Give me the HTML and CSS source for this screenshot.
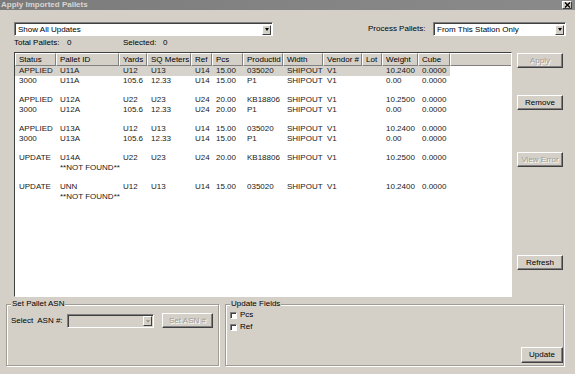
FILE: index.html
```html
<!DOCTYPE html>
<html lang="en">

<head>
    <meta charset="UTF-8">
    <title>Apply Imported Pallets</title>
    <link rel="stylesheet" href="styles.css">
</head>

<body>
    <div class="window">
        <div class="titlebar">
            <span class="title">Apply Imported Pallets</span>
            <span class="close-btn">
                <svg width="7" height="6" viewBox="0 0 7 6"><path d="M1 0.5 L6 5.5 M6 0.5 L1 5.5" stroke="#000" stroke-width="1.4"/></svg>
            </span>
        </div>

        <div class="toolbar">
            <div class="combo combo-filter">
                <span class="combo-text">Show All Updates</span>
                <span class="combo-arrow"><span class="tri"></span></span>
            </div>
            <span class="process-label">Process Pallets:</span>
            <div class="combo combo-process">
                <span class="combo-text">From This Station Only</span>
                <span class="combo-arrow"><span class="tri"></span></span>
            </div>
        </div>

        <div class="totals">
            <span class="totals-label">Total Pallets:</span>
            <span class="totals-count">0</span>
            <span class="totals-label">Selected:</span>
            <span class="totals-count">0</span>
        </div>

        <div class="main">
            <div class="grid">
                <table class="grid-table">
                    <colgroup>
                        <col style="width:41px"><col style="width:63px"><col style="width:28px"><col style="width:44px">
                        <col style="width:21px"><col style="width:31px"><col style="width:40px"><col style="width:40px">
                        <col style="width:39px"><col style="width:20px"><col style="width:36px"><col style="width:32px">
                        <col>
                    </colgroup>
                    <thead>
                        <tr>
                            <th>Status</th><th>Pallet ID</th><th>Yards</th><th>SQ Meters</th><th>Ref</th><th>Pcs</th>
                            <th>Productid</th><th>Width</th><th>Vendor #</th><th>Lot</th><th>Weight</th><th>Cube</th><th class="filler"></th>
                        </tr>
                    </thead>
                    <tbody>
                        <tr class="selected">
                            <td>APPLIED</td><td>U11A</td><td>U12</td><td>U13</td><td>U14</td><td>15.00</td>
                            <td>035020</td><td>SHIPOUT</td><td>V1</td><td></td><td>10.2400</td><td>0.0000</td><td class="filler"></td>
                        </tr>
                        <tr>
                            <td>3000</td><td>U11A</td><td>105.6</td><td>12.33</td><td>U14</td><td>15.00</td>
                            <td>P1</td><td>SHIPOUT</td><td>V1</td><td></td><td>0.00</td><td>0.0000</td><td></td>
                        </tr>
                        <tr class="spacer"><td colspan="13"></td></tr>
                        <tr>
                            <td>APPLIED</td><td>U12A</td><td>U22</td><td>U23</td><td>U24</td><td>20.00</td>
                            <td>KB18806</td><td>SHIPOUT</td><td>V1</td><td></td><td>10.2500</td><td>0.0000</td><td></td>
                        </tr>
                        <tr>
                            <td>3000</td><td>U12A</td><td>105.6</td><td>12.33</td><td>U24</td><td>20.00</td>
                            <td>P1</td><td>SHIPOUT</td><td>V1</td><td></td><td>0.00</td><td>0.0000</td><td></td>
                        </tr>
                        <tr class="spacer"><td colspan="13"></td></tr>
                        <tr>
                            <td>APPLIED</td><td>U13A</td><td>U12</td><td>U13</td><td>U14</td><td>15.00</td>
                            <td>035020</td><td>SHIPOUT</td><td>V1</td><td></td><td>10.2400</td><td>0.0000</td><td></td>
                        </tr>
                        <tr>
                            <td>3000</td><td>U13A</td><td>105.6</td><td>12.33</td><td>U14</td><td>15.00</td>
                            <td>P1</td><td>SHIPOUT</td><td>V1</td><td></td><td>0.00</td><td>0.0000</td><td></td>
                        </tr>
                        <tr class="spacer"><td colspan="13"></td></tr>
                        <tr>
                            <td>UPDATE</td><td>U14A</td><td>U22</td><td>U23</td><td>U24</td><td>20.00</td>
                            <td>KB18806</td><td>SHIPOUT</td><td>V1</td><td></td><td>10.2500</td><td>0.0000</td><td></td>
                        </tr>
                        <tr>
                            <td></td><td colspan="3">**NOT FOUND**</td><td></td><td></td>
                            <td></td><td></td><td></td><td></td><td></td><td></td><td></td>
                        </tr>
                        <tr class="spacer"><td colspan="13"></td></tr>
                        <tr>
                            <td>UPDATE</td><td>UNN</td><td>U12</td><td>U13</td><td>U14</td><td>15.00</td>
                            <td>035020</td><td>SHIPOUT</td><td>V1</td><td></td><td>10.2400</td><td>0.0000</td><td></td>
                        </tr>
                        <tr>
                            <td></td><td colspan="3">**NOT FOUND**</td><td></td><td></td>
                            <td></td><td></td><td></td><td></td><td></td><td></td><td></td>
                        </tr>
                    </tbody>
                </table>
            </div>

            <div class="side-buttons">
                <span class="btn btn-apply disabled">Apply</span>
                <span class="btn btn-remove">Remove</span>
                <span class="btn btn-error disabled">View Error</span>
                <span class="btn btn-refresh">Refresh</span>
            </div>
        </div>

        <div class="bottom">
            <fieldset class="group group-asn">
                <legend>Set Pallet ASN</legend>
                <div class="group-body asn-row">
                    <span class="asn-label">Select&nbsp; ASN #:</span>
                    <div class="combo combo-asn disabled">
                        <span class="combo-text"></span>
                        <span class="combo-arrow"><span class="tri"></span></span>
                    </div>
                    <span class="btn btn-setasn disabled">Set ASN #</span>
                </div>
            </fieldset>
            <fieldset class="group group-update">
                <legend>Update Fields</legend>
                <div class="group-body update-body">
                    <label class="check"><span class="check-box"></span>Pcs</label>
                    <label class="check"><span class="check-box"></span>Ref</label>
                    <span class="btn btn-update">Update</span>
                </div>
            </fieldset>
        </div>
    </div>
</body>

</html>
```

FILE: styles.css
```css
body {
    margin: 0;
    width: 575px;
    height: 374px;
    background-color: #d4d0c8;
    font-family: "Liberation Sans", Arial, sans-serif;
    font-size: 8px;
    color: #000;
    overflow: hidden;
}

.window {
    width: 575px;
    height: 374px;
    background-color: #d4d0c8;
}

.titlebar {
    display: flex;
    align-items: center;
    height: 10px;
    padding-left: 1px;
    padding-right: 3px;
    background: linear-gradient(to right, #7b7b7b, #858585 60%, #8a8a8a);
}

.title {
    flex: auto;
    color: #d8d6d2;
    font-weight: bold;
    font-size: 8px;
    line-height: 10px;
}

.close-btn {
    display: flex;
    align-items: center;
    justify-content: center;
    width: 10px;
    height: 8px;
    box-sizing: border-box;
    background-color: #d4d0c8;
    border: 1px solid;
    border-color: #fff #404040 #404040 #fff;
}

/* top controls */

.toolbar {
    display: flex;
    align-items: center;
    margin-top: 12px;
    padding-left: 14px;
}

.combo {
    display: flex;
    align-items: center;
    height: 14px;
    box-sizing: border-box;
    background-color: #fff;
    border: 1px solid;
    border-color: #808080 #fff #fff #808080;
    box-shadow: inset 1px 1px #404040;
}

.combo-text {
    flex: auto;
    padding-left: 3px;
    padding-top: 1px;
    line-height: 10px;
    white-space: nowrap;
}

.combo-arrow {
    display: flex;
    align-items: center;
    justify-content: center;
    width: 9px;
    height: 10px;
    margin-right: 1px;
    margin-top: 1px;
    box-sizing: border-box;
    background-color: #d4d0c8;
    border: 1px solid;
    border-color: #fff #404040 #404040 #fff;
}

.tri {
    width: 0;
    height: 0;
    border-left: 2px solid transparent;
    border-right: 2px solid transparent;
    border-top: 3px solid #000;
}

.combo-filter {
    width: 259px;
}

.process-label {
    margin-left: 95px;
    width: 64px;
    line-height: 10px;
    color: #000;
}

.combo-process {
    width: 133px;
    margin-left: 1px;
}

.totals {
    display: flex;
    margin-top: 2px;
    padding-left: 14px;
    line-height: 10px;
    height: 10px;
}

.totals-label {
    width: 53px;
}

.totals-label+.totals-count {
    width: 56px;
}

.totals-label:nth-child(3) {
    width: 40px;
}

/* grid + side buttons */

.main {
    display: flex;
    margin-top: 4px;
    padding-left: 14px;
    height: 245px;
}

.grid {
    width: 498px;
    height: 245px;
    box-sizing: border-box;
    background-color: #fff;
    border: 1px solid;
    border-color: #404040 #fff #fff #404040;
    overflow: hidden;
}

.grid-table {
    width: 100%;
    table-layout: fixed;
    border-collapse: separate;
    border-spacing: 0;
    font-size: 8px;
}

.grid-table th {
    height: 13px;
    box-sizing: border-box;
    padding: 0 0 0 3px;
    text-align: left;
    font-weight: normal;
    line-height: 10px;
    background-color: #d4d0c8;
    border-top: 1px solid #fff;
    border-left: 1px solid #fff;
    border-right: 1px solid #808080;
    border-bottom: 1px solid #808080;
    white-space: nowrap;
    overflow: hidden;
}

.grid-table th.filler {
    border-right: 0;
}

.grid-table td {
    height: 10px;
    padding: 0 0 0 4px;
    line-height: 10px;
    white-space: nowrap;
    overflow: hidden;
    color: #1a1a1a;
}

.grid-table tr.selected td {
    background-color: #d6d3cc;
}

.grid-table tr.selected td.filler {
    background-color: #fff;
}

.grid-table tr.spacer td {
    height: 9px;
    line-height: 9px;
}

.side-buttons {
    display: flex;
    flex-direction: column;
    margin-left: 5px;
    width: 46px;
}

.btn {
    display: flex;
    align-items: center;
    justify-content: center;
    height: 15px;
    box-sizing: border-box;
    background-color: #d4d0c8;
    border: 1px solid;
    border-color: #fff #404040 #404040 #fff;
    box-shadow: inset -1px -1px #808080;
    line-height: 10px;
    white-space: nowrap;
    color: #000;
}

.btn.disabled {
    color: #a09c94;
    text-shadow: 1px 1px #fff;
}

.btn-apply {
    margin-top: 1px;
}

.btn-remove {
    margin-top: 27px;
}

.btn-error {
    margin-top: 42px;
}

.btn-refresh {
    margin-top: 88px;
}

/* bottom group boxes */

.bottom {
    display: flex;
    margin-top: 2px;
    padding-left: 6px;
}

.group {
    margin: 0;
    padding: 0 0 0 4px;
    height: 67px;
    box-sizing: border-box;
    border: 1px solid #a09c94;
    box-shadow: inset 1px 1px #fff, 1px 1px #fff;
    min-width: 0;
}

.group legend {
    padding: 0 1px;
    margin-left: 0;
    line-height: 10px;
    font-size: 8px;
    background-color: #d4d0c8;
}

.group-asn {
    width: 213px;
}

.group-update {
    width: 339px;
    margin-left: 6px;
}

.asn-row {
    display: flex;
    align-items: center;
    margin-top: 4px;
}

.asn-label {
    width: 56px;
    white-space: nowrap;
}

.combo-asn {
    width: 87px;
    height: 14px;
    background-color: #d4d0c8;
}

.combo-asn .tri {
    border-top-color: #a09c94;
}

.btn-setasn {
    width: 51px;
    margin-left: 8px;
}

.update-body {
    display: flex;
    flex-direction: column;
    height: 55px;
}

.check {
    display: flex;
    align-items: center;
    height: 12px;
    line-height: 10px;
}

.check-box {
    width: 7px;
    height: 7px;
    margin-right: 3px;
    box-sizing: border-box;
    background-color: #fff;
    border: 1px solid;
    border-color: #808080 #fff #fff #808080;
    box-shadow: inset 1px 1px #404040;
}

.btn-update {
    align-self: flex-end;
    margin-top: auto;
    margin-bottom: 1px;
    width: 42px;
    height: 16px;
}
```
